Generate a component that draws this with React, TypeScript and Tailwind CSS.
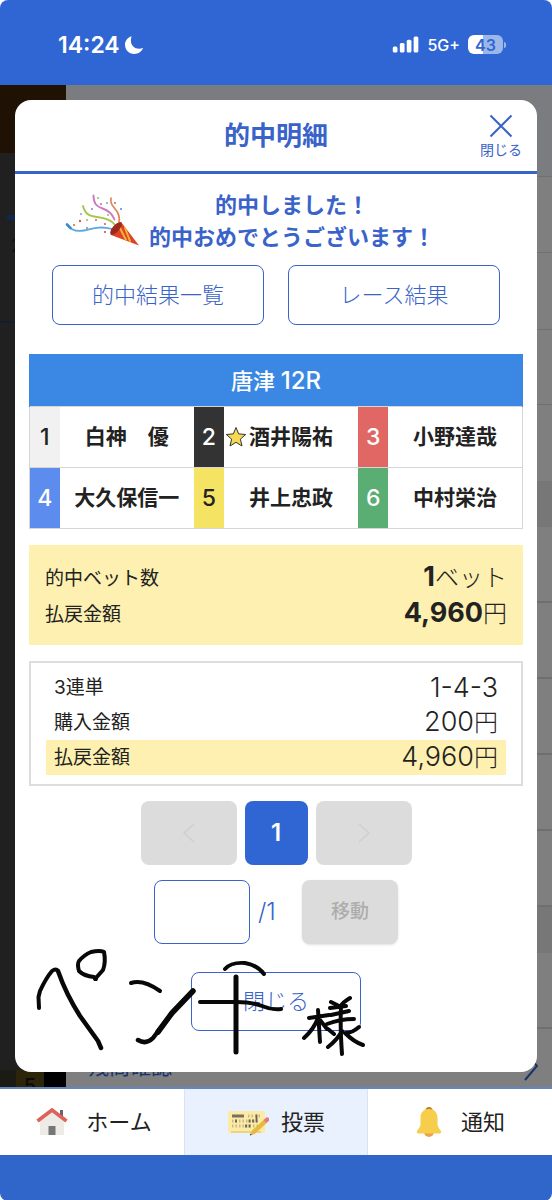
import React from "react";

const racers = [
  [
    { no: 1, name: "白神　優", tone: "bg-[#f1f1f1] text-[#222]" },
    { no: 2, name: "酒井陽祐", tone: "bg-[#333] text-white", starred: true },
    { no: 3, name: "小野達哉", tone: "bg-[#e06763] text-white" },
  ],
  [
    { no: 4, name: "大久保信一", tone: "bg-[#5b8cee] text-white" },
    { no: 5, name: "井上忠政", tone: "bg-[#f5e464] text-[#222]" },
    { no: 6, name: "中村栄治", tone: "bg-[#5aae74] text-white" },
  ],
];

function StatusBar() {
  return (
    <header className="flex h-[85px] items-center justify-between bg-[#3066d3] pt-1 pr-[46px] pl-[58px] text-white">
      <div className="flex items-center gap-1">
        <span className="text-[23px] leading-7 font-semibold">14:24</span>
        <svg viewBox="0 0 20 20" className="size-5" fill="currentColor" aria-label="おやすみモード">
          <path d="M7.6 1.2C3.6 2.3 1 5.800 1 9.800c0 5.100 4 9.200 9.200 9.200 4.200 0 7.700-2.600 9-6.200-1.300.7-2.600 1-4 1-4.700 0-8.300-3.500-8.300-8 0-1.600.2-3.200.7-4.600z" />
        </svg>
      </div>
      <div className="flex items-center gap-2">
        <svg viewBox="0 0 28 18" className="h-[17px] w-[27px]" fill="currentColor" aria-label="電波">
          <rect x="0.500" y="11" width="5" height="6.500" rx="1.600" />
          <rect x="8" y="7.500" width="5" height="10" rx="1.600" />
          <rect x="15.300" y="4" width="5" height="13.500" rx="1.600" />
          <rect x="22.600" y="0.500" width="5" height="17" rx="1.600" />
        </svg>
        <span className="text-base leading-6 font-medium">5G+</span>
        <div className="flex items-center gap-px">
          <span className="flex h-[19px] w-[35px] items-center justify-center rounded-md bg-linear-to-r from-white from-43% to-[#9db6e9] to-43% text-base font-semibold text-[#3066d3]">
            43
          </span>
          <span className="h-1.5 w-0.5 rounded-r-full bg-[#9db6e9]" />
        </div>
      </div>
    </header>
  );
}

function DimmedPage() {
  return (
    <div aria-hidden="true" className="col-start-1 row-start-1 flex overflow-hidden bg-[#7f7f7f]">
      <div className="flex w-[66px] flex-col bg-[#202020]">
        <div className="h-[68px] bg-[#1f1204]" />
        <div className="h-[62px]" />
        <div className="ml-[7px] h-[5px] bg-[#10264f]" />
        <div className="h-[103px] border-b-2 border-[#121c35] pt-3 pl-[11px] text-lg text-[#111]">2</div>
        <div className="grow" />
        <div className="flex h-[17px] justify-between bg-[#1c1a14]">
          <span className="ml-4 flex w-7 justify-center bg-[#2c2509] pt-1 text-xl leading-6 font-medium text-[#0a0a0a]">5</span>
          <span className="w-[22px] bg-black" />
        </div>
      </div>
      <div className="flex grow flex-col">
        <div className="h-[91px] bg-[#7a7c80]" />
        <div className="h-[77px] border-y border-[#707070]" />
        <div className="h-[76px]" />
        <div className="h-[76px] border-y border-[#6f6f6f]" />
        <div className="h-[76px]" />
        <div className="h-[46px] bg-[#777]" />
        <div className="h-[76px] border-b-2 border-[#6f6f6f]" />
        <div className="h-[76px] border-b-2 border-[#6f6f6f]" />
        <div className="h-[76px] border-b-2 border-[#6f6f6f]" />
        <div className="h-[76px] border-b-2 border-[#6f6f6f]" />
        <div className="h-[76px] border-b-2 border-[#6f6f6f]" />
        <div className="h-[46px] bg-[#777]" />
        <div className="h-[76px] border-b-2 border-[#6f6f6f]" />
        <div className="flex grow items-end justify-between pr-3.5 pb-1.5 pl-[22px]">
          <span className="text-[21px] leading-7 text-[#18336a]">残高確認</span>
          <svg viewBox="0 0 14 28" className="h-7 w-3.5" fill="none" stroke="#18336a" strokeWidth="2">
            <path d="M1 1 13 13 1 27" />
          </svg>
        </div>
      </div>
    </div>
  );
}

function PartyPopper() {
  return (
    <svg viewBox="0 -13 75 54" className="h-[54px] w-[75px] shrink-0" fill="none" strokeLinecap="round" aria-label="クラッカー">
      <path d="M2 17.500c4 6 9 7.500 17 6S34 18.500 47 22" stroke="#59a9df" strokeWidth="1.800" />
      <path d="m2 17.500 3.500 3.500" stroke="#3b8ccc" strokeWidth="2.600" />
      <path d="M18-1c2 8 6 10 14 11s15 3 18 8" stroke="#a7c64d" strokeWidth="1.900" />
      <path d="M28.500-11.500c0 8 3 11 9 13s10 6 12 11" stroke="#cf7ac0" strokeWidth="1.900" />
      <path d="M46-9c-1 6 2 8 5 12s4 7 3 12" stroke="#dc8755" strokeWidth="1.700" />
      <path d="M56 15 74 38.500 46 28c-1-6 4-12 10-13z" fill="#dc4329" />
      <path d="m54 19 7 14M60 21l5 13" stroke="#f3b236" strokeWidth="2" />
      <ellipse cx="51" cy="21.500" rx="8" ry="3.300" transform="rotate(-48 51 21.500)" fill="#9c291b" />
      <circle cx="33" cy="-9" r="1" fill="#8cbf54" />
      <circle cx="36" cy="-3" r="1.100" fill="#d669a5" />
      <circle cx="42" cy="-4" r="1" fill="#6fa8d8" />
      <circle cx="50" cy="-4" r="1" fill="#d9614e" />
      <circle cx="56" cy="2" r="1.100" fill="#8a7bd0" />
      <circle cx="27" cy="2" r="1" fill="#8a7bd0" />
      <circle cx="16" cy="7" r="1" fill="#6fa8d8" />
      <circle cx="15" cy="14" r="1.200" fill="#d9614e" />
      <circle cx="22" cy="13" r="1" fill="#8cbf54" />
      <circle cx="31" cy="13" r="1" fill="#d9614e" />
      <circle cx="22" cy="21" r="1" fill="#8a7bd0" />
      <circle cx="40" cy="17" r="1.100" fill="#d9614e" />
      <circle cx="40" cy="25" r="1.100" fill="#c64f75" />
      <circle cx="9" cy="18" r="1" fill="#d9614e" />
      <circle cx="43" cy="8" r="1" fill="#8cbf54" />
    </svg>
  );
}

function RaceTable() {
  return (
    <table className="mt-[29px] w-full table-fixed border-collapse">
      <colgroup>
        <col className="w-[30px]" />
        <col />
        <col className="w-[30px]" />
        <col />
        <col className="w-[30px]" />
        <col />
      </colgroup>
      <thead>
        <tr>
          <th
            colSpan={6}
            className="h-[52px] border-x border-t border-[#3a88e3] bg-[#3a88e3] p-0 text-[22px] leading-7 font-medium text-white"
          >
            唐津 <span className="text-2xl leading-7">12R</span>
          </th>
        </tr>
      </thead>
      <tbody>
        {racers.map((row) => (
          <tr key={row[0].no} className="border border-[#d6d6d6]">
            {row.map((r) => (
              <React.Fragment key={r.no}>
                <th scope="row" className={`h-[61px] p-0 text-[23px] font-medium ${r.tone}`}>
                  {r.no}
                </th>
                <td className="relative p-0 text-center text-[21px] font-bold whitespace-nowrap text-[#222]">
                  {r.starred && (
                    <svg viewBox="0 0 22 22" className="absolute top-1/2 left-px size-[22px] -translate-y-1/2" aria-label="お気に入り">
                      <path
                        d="m11 1.500 2.700 6.400 7 .6-5.300 4.600 1.600 6.900-6-3.700L5 20l1.600-6.900-5.300-4.600 7-.6z"
                        fill="#f5d950"
                        stroke="#333"
                        strokeWidth="1"
                      />
                    </svg>
                  )}
                  {r.name}
                </td>
              </React.Fragment>
            ))}
          </tr>
        ))}
      </tbody>
    </table>
  );
}

function Handwriting() {
  return (
    <svg
      viewBox="20 940 360 124"
      className="pointer-events-none absolute bottom-[7px] left-[5px] h-[124px] w-[360px]"
      fill="none"
      stroke="#080808"
      strokeWidth="4"
      strokeLinecap="round"
      strokeLinejoin="round"
      aria-label="ペンテ様"
    >
      <path d="M39 1007 38.500 996 40 990Q46 977 52 970 56 967 58 970" />
      <path d="M58 970Q66 993 80 1015L98 1040 101 1047" strokeWidth="4.500" />
      <path d="M96 978 94 976Q84 975 79 970 77 963 79 960 84 954 91 951 100 949 104 951 106 961 103 969L95 978" />
      <path d="M131 982Q143 978 160 990" />
      <path d="M138 1039Q146 1044 153 1037L172 1012" strokeWidth="4.500" />
      <path d="M158 1031 172 1012 193 990" strokeWidth="5.500" />
      <path d="M225 968Q231 961 245 962 257 964 264 973" />
      <path d="M200 1001H236Q252 1001 262 1005 271 1009 281 1008" />
      <path d="M236 976V1051" strokeWidth="5" />
      <path d="M309 1017 329 1014M318 1009 320 1041M304 1037Q314 1028 318 1017M320 1019 327 1028" />
      <path d="M331 1001 339 1005M350 997Q343 1001 340 1006M330 1007 346 1005M331 1014 349 1010M327 1023Q340 1018 354 1018" />
      <path d="M341 1006Q340 1026 342 1053M328 1028 334 1033M328 1046Q337 1039 342 1030M359 1026Q352 1032 346 1032M345 1032Q354 1041 363 1044" />
    </svg>
  );
}

function ResultDialog() {
  return (
    <main
      role="dialog"
      aria-labelledby="dialog-title"
      className="relative z-10 col-start-1 row-start-1 m-[15px] rounded-2xl bg-white text-[#222]"
    >
      <div className="relative flex h-[74px] items-center justify-center border-b-3 border-[#3963c9]">
        <h1 id="dialog-title" className="text-[26px] leading-8 font-bold text-[#3963c9]">
          的中明細
        </h1>
        <button type="button" className="absolute top-3.5 right-[15px] flex flex-col items-center text-[#3963c9]">
          <svg viewBox="0 0 24 24" className="size-6" fill="none" stroke="currentColor" strokeWidth="2">
            <path d="m1.500 1.500 21 21m0-21-21 21" />
          </svg>
          <span className="text-[14px] leading-6">閉じる</span>
        </button>
      </div>

      <div className="px-3.5 pb-[41px]">
        <div className="flex items-center gap-[9px] pt-[15px] pl-9">
          <PartyPopper />
          <p className="text-center text-[22px] leading-8 font-bold whitespace-nowrap text-[#3963c9]">
            的中しました！
            <br />
            的中おめでとうございます！
          </p>
        </div>

        <div className="mt-3 grid grid-cols-2 gap-6 px-[23px] text-[22px] font-light text-[#3963c9]">
          <button type="button" className="h-[60px] rounded-lg border border-[#3963c9]">
            的中結果一覧
          </button>
          <button type="button" className="h-[60px] rounded-lg border border-[#3963c9]">
            レース結果
          </button>
        </div>

        <RaceTable />

        <dl className="mt-4 bg-[#fdf0b0] px-4 py-3.5">
          <div className="flex h-9 items-center justify-between">
            <dt className="pt-1 text-[19px] leading-7">的中ベット数</dt>
            <dd className="text-2xl font-light">
              <b className="text-[27px] leading-8 font-bold">1</b>ベット
            </dd>
          </div>
          <div className="flex h-9 items-center justify-between">
            <dt className="pt-1 text-[19px] leading-7">払戻金額</dt>
            <dd className="text-2xl font-light">
              <b className="text-[27px] leading-8 font-bold">4,960</b>円
            </dd>
          </div>
        </dl>

        <dl className="mt-4 border-2 border-[#ddd] px-[15px] pt-[7px] pb-[9px] text-2xl font-light">
          <div className="flex h-[35px] items-center justify-between px-2">
            <dt className="text-[19px] leading-7 font-normal">3連単</dt>
            <dd className="text-[27px] leading-8">1-4-3</dd>
          </div>
          <div className="flex h-[35px] items-center justify-between px-2">
            <dt className="text-[19px] leading-7 font-normal">購入金額</dt>
            <dd>
              <span className="text-[27px] leading-8">200</span>円
            </dd>
          </div>
          <div className="flex h-[35px] items-center justify-between bg-[#fdf0b0] px-2">
            <dt className="text-[19px] leading-7 font-normal">払戻金額</dt>
            <dd>
              <span className="text-[27px] leading-8">4,960</span>円
            </dd>
          </div>
        </dl>

        <nav aria-label="ページ" className="mt-[15px] flex justify-center gap-2">
          <button type="button" disabled aria-label="前へ" className="flex h-16 w-24 items-center justify-center rounded-lg bg-[#dcdcdc]">
            <svg viewBox="0 0 12 20" className="h-5 w-3" fill="none" stroke="#cfcfcf" strokeWidth="1.500">
              <path d="M11 1 1 10l10 9" />
            </svg>
          </button>
          <button type="button" aria-current="page" className="h-16 w-[63px] rounded-lg bg-[#3066d3] text-2xl font-semibold text-white">
            1
          </button>
          <button type="button" disabled aria-label="次へ" className="flex h-16 w-24 items-center justify-center rounded-lg bg-[#dcdcdc]">
            <svg viewBox="0 0 12 20" className="h-5 w-3" fill="none" stroke="#cfcfcf" strokeWidth="1.500">
              <path d="m1 1 10 9-10 9" />
            </svg>
          </button>
        </nav>

        <form className="mt-[15px] flex items-center justify-center">
          <input aria-label="ページ番号" className="h-16 w-24 rounded-lg border border-[#3963c9] text-center text-xl" />
          <span className="w-[52px] pl-2 text-2xl font-light text-[#3963c9]">/1</span>
          <button type="button" disabled className="h-16 w-24 rounded-lg bg-[#dcdcdc] text-[19px] font-medium text-[#adadad] shadow">
            移動
          </button>
        </form>

        <div className="mt-7 flex justify-center">
          <button type="button" className="h-[59px] w-[170px] rounded-lg border border-[#3963c9] text-[22px] font-light text-[#3963c9]">
            閉じる
          </button>
        </div>
      </div>
      <Handwriting />
    </main>
  );
}

function HomeIcon() {
  return (
    <svg viewBox="0 0 32 30" className="h-[30px] w-8" aria-hidden="true">
      <path d="M24 3h3v9h-3z" fill="#666" />
      <path d="M4 13 16 3l12 10v15H4z" fill="#eeebe7" />
      <path d="M12.500 19h7v9h-7z" fill="#777" />
      <path d="M1.500 14 16 3l14.500 11" fill="none" stroke="#dc625a" strokeWidth="3.600" />
    </svg>
  );
}

function TicketIcon() {
  return (
    <svg viewBox="0 0 42 30" className="h-[30px] w-[42px]" aria-hidden="true">
      <rect x="1" y="4" width="37" height="22" rx="1.500" fill="#fbeba6" />
      <path d="M4 25h30" stroke="#e6cc72" strokeWidth="1.500" />
      <path d="M5 9h12" stroke="#777162" strokeWidth="3" />
      <path d="M21 9h12M5 14h28M5 19h28" stroke="#cbb985" strokeWidth="3" strokeDasharray="1.500 2" />
      <path d="M9 12.500v3M22.500 12.500v3M26 12.500v3M29.500 7.500v8M19 17.500v3M22.500 17.500v3" stroke="#69624f" strokeWidth="1.800" />
      <path d="m25 23.500 12-11 3 3.200-12 11.100-4.500 1.700z" fill="#e8b93e" />
      <path d="m36.500 13 2.500-2.300c2-1.500 4.500 1.300 3 3L39.500 16z" fill="#e47c7a" />
      <path d="m22.800 28.500 1.900-.7-1.200-1.200z" fill="#333" />
    </svg>
  );
}

function BellIcon() {
  return (
    <svg viewBox="0 0 28 32" className="h-8 w-7" aria-hidden="true">
      <circle cx="14" cy="4.500" r="3.500" fill="#bd8030" />
      <circle cx="14" cy="26" r="5" fill="#eda247" />
      <path d="M14 3C8 3 5.500 7 5.500 12v5c0 4-1.500 5-3.500 8-.6 1.500 0 2.500 1.500 2.500h21c1.500 0 2.100-1 1.500-2.500-2-3-3.500-4-3.500-8v-5C22.500 7 20 3 14 3z" fill="#f6ce4b" />
    </svg>
  );
}

function BottomNav() {
  return (
    <nav aria-label="メイン" className="relative grid h-[68px] grid-cols-3 border-t-2 border-[#6484c4] bg-white text-[22px] text-[#222]">
      <a href="#home" className="flex items-center justify-center gap-[18px] pl-1">
        <HomeIcon />
        ホーム
      </a>
      <a href="#vote" className="flex items-center justify-center gap-3 border-x border-[#dce3ef] bg-[#eaf1fe]">
        <TicketIcon />
        投票
      </a>
      <a href="#notice" className="flex items-center justify-center gap-[18px]">
        <BellIcon />
        通知
      </a>
    </nav>
  );
}

export default function App() {
  return (
    <div className="bg-white font-['Inter','Noto_Sans_CJK_JP',sans-serif]">
      <div className="overflow-hidden rounded-lg">
        <StatusBar />
        <section className="grid">
          <DimmedPage />
          <ResultDialog />
        </section>
        <BottomNav />
        <footer className="h-[46px] bg-[#3066c9]" />
      </div>
    </div>
  );
}
